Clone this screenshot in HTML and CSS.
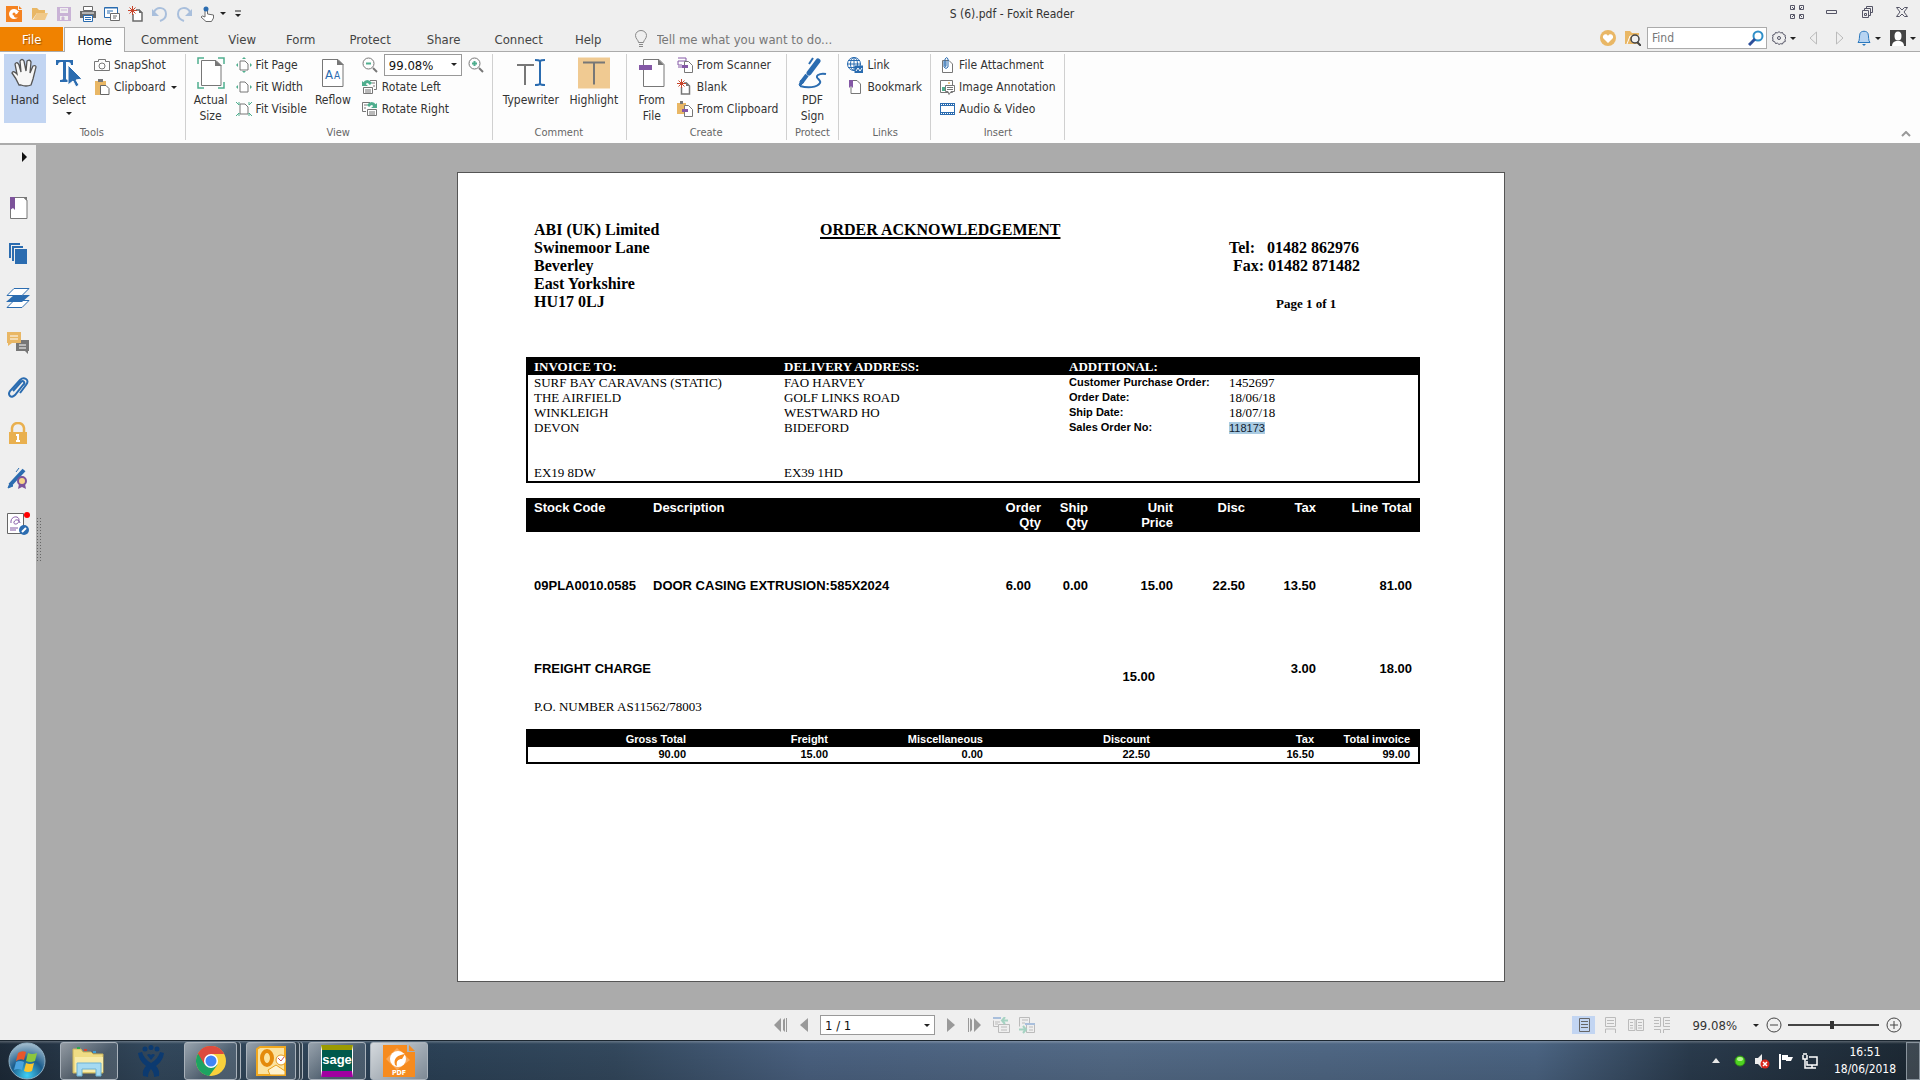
FILE: index.html
```html
<!DOCTYPE html>
<html lang="en">
<head>
    <meta charset="UTF-8">
    <meta name="viewport" content="width=device-width, initial-scale=1.0">
    <title>S (6).pdf - Foxit Reader</title>
    <link rel="stylesheet" href="styles.css">
</head>
<body>
    <!-- title bar -->
    <header class="titlebar">
        <div class="quick">
            <button class="logo" title="Foxit"><svg width="16" height="16" viewBox="0 0 16 16"><path d="M0 0h12v4h4v12H0z" fill="#f58220"/><path d="M13 0l3 3h-3z" fill="#f58220"/><path d="M12 5a5 5 0 1 0 0 6c-1 1-4 1-4-1 0-1 1-2 3-2l2-3z" fill="#fff"/><circle cx="8" cy="8" r="1.500" fill="#f58220"/></svg></button>
            <button title="Open"><svg width="16" height="16" viewBox="0 0 16 16"><path d="M0 14V2h5l2 2h6v3H5z" fill="#e9b765"/><path d="M1 14L5 7h11l-3 7z" fill="#f0c98a"/></svg></button>
            <button title="Save"><svg width="16" height="16" viewBox="0 0 16 16"><path d="M1 1h14v14H1z" fill="#c9b3d6"/><path d="M4 2h8v5H4zM4 10h8v4H4z" fill="#efefef"/><path d="M6 11h2v3H6zM5 4h6" fill="#c9b3d6" stroke="#c9b3d6"/></svg></button>
            <button title="Print"><svg width="16" height="16" viewBox="0 0 16 16"><path d="M3.500.5h9v4h-9z" fill="#fff" stroke="#6b6b6b"/><path d="M0 5h16v7H0z" fill="#6b6b6b"/><path d="M2 7h12" stroke="#fff"/><path d="M3.500 9.500h9v6h-9z" fill="#fff" stroke="#2b6cb0"/><path d="M5 11.500h6M5 13.500h6" stroke="#2b6cb0"/></svg></button>
            <button title="Email"><svg width="16" height="16" viewBox="0 0 16 16"><path d="M.5 1.500h13v10H.5z" fill="#fff" stroke="#2b6cb0"/><path d="M1 2h13M3 5h6M3 7h3" stroke="#2b6cb0"/><path d="M6.500 7.500h9v7h-9z" fill="#fff" stroke="#6b6b6b"/><path d="M9 10h4M9 12h3" stroke="#6b6b6b"/></svg></button>
            <button title="Blank"><svg width="16" height="16" viewBox="0 0 16 16"><path d="M5 8v7h9V7l-3-3H8" fill="#fff" stroke="#6b6b6b" stroke-width="1.500"/><path d="M11 3l4 4h-4z" fill="#6b6b6b"/><path d="M4.500 0v9M0 4.500h9M1.500 1.500l6 6M7.500 1.500l-6 6" stroke="#c8452b"/></svg></button>
            <button title="Undo"><svg width="16" height="16" viewBox="0 0 16 16"><path d="M2 6c3-6 12-5 12 2 0 4-3 6-6 7" fill="none" stroke="#a9bfdc" stroke-width="2"/><path d="M0 3v7h7z" fill="#a9bfdc"/></svg></button>
            <button title="Redo"><svg width="16" height="16" viewBox="0 0 16 16"><path d="M14 6C11 0 2 1 2 8c0 4 3 6 6 7" fill="none" stroke="#a9bfdc" stroke-width="2"/><path d="M16 3v7H9z" fill="#a9bfdc"/></svg></button>
            <button class="drop" title="Touch mode"><svg width="16" height="16" viewBox="0 0 16 16"><path d="M5 10V3.500q1.500-2 2.500 0V8l6 1v3l-2 3.500H6L1 11q1-2 4 0z" fill="#fff" stroke="#6b6b6b"/><circle cx="6" cy="3" r="2.500" fill="#2b6cb0"/></svg></button>
            <button title="Customise"><svg width="8" height="8" viewBox="0 0 8 8"><path d="M1 1h6" stroke="#222"/><path d="M1 4h6L4 7z" fill="#222"/></svg></button>
        </div>
        <h1 class="title">S (6).pdf - Foxit Reader</h1>
        <div class="window-buttons">
            <button title="Layout"><svg width="14" height="14" viewBox="0 0 14 14" fill="none" stroke="#556"><path d="M.5.5h4v4h-4zM9.500.5h4v4h-4zM.5 9.500h4v4h-4zM9.500 9.500h4v4h-4zM2 2l2 2M12 2l-2 2M2 12l2-2M12 12l-2-2"/></svg></button>
            <button title="Minimise"><svg width="14" height="14" viewBox="0 0 14 14" fill="none" stroke="#556"><path d="M1.500 5.500h10v3h-10z"/></svg></button>
            <button title="Restore"><svg width="14" height="14" viewBox="0 0 14 14" fill="none" stroke="#556"><path d="M2.500 5.500h6v7h-6zM4.500 8.500h2v2h-2zM4.500 5V3.500h6v7H9M6.500 3V1.500h6v6H11"/></svg></button>
            <button title="Close"><svg width="14" height="14" viewBox="0 0 14 14" fill="none" stroke="#556"><path d="M1.500 2.500h3L7 5l2.500-2.500h3L9 7l3.500 4.500h-3L7 9l-2.500 2.500h-3L5 7z"/></svg></button>
        </div>
    </header>

    <!-- tabs -->
    <nav class="tabs">
        <a class="tab file" href="#">File</a>
        <a class="tab current" href="#">Home</a>
        <a class="tab comment" href="#">Comment</a>
        <a class="tab" href="#">View</a>
        <a class="tab" href="#">Form</a>
        <a class="tab protect" href="#">Protect</a>
        <a class="tab wide" href="#">Share</a>
        <a class="tab wide" href="#">Connect</a>
        <a class="tab" href="#">Help</a>
        <label class="tell">
            <svg width="12" height="18" viewBox="0 0 12 18" fill="none" stroke="#888"><path d="M3.500 12.500C3.500 10 .5 9 .5 5.500a5.500 5 0 0 1 11 0C11.500 9 8.500 10 8.500 12.500zM4 14.500h4M4 16.500h4"/></svg>
            <input type="text" placeholder="Tell me what you want to do..." aria-label="Tell me what you want to do">
        </label>
        <div class="tab-tools">
            <button title="Favourite"><svg width="16" height="16" viewBox="0 0 16 16"><circle cx="8" cy="8" r="8" fill="#e9b765"/><path d="M8 13L3 8c-1-4 4-5 5-2 1-3 6-2 5 2z" fill="#fff"/></svg></button>
            <button title="Search folder"><svg width="16" height="16" viewBox="0 0 16 16"><path d="M0 14V1h5l2 2h7v11z" fill="#e9b765"/><path d="M2 14l3-8h9" fill="none" stroke="#fff"/><circle cx="10" cy="9" r="4" fill="#efefef" stroke="#444" stroke-width="1.500"/><path d="M12 12l4 4" stroke="#444" stroke-width="2"/></svg></button>
            <label class="find">
                <input type="text" placeholder="Find" aria-label="Find">
                <svg width="16" height="16" viewBox="0 0 16 16" fill="none"><circle cx="10" cy="6" r="4.500" stroke="#2f8fc8" stroke-width="2"/><path d="M7 9l-6 6" stroke="#2c4f9a" stroke-width="3"/></svg>
            </label>
            <button class="drop gear" title="Settings"><svg width="14" height="14" viewBox="0 0 14 14" fill="none" stroke="#556"><path d="M7 .5l1.500 1.500 2-.5.8 1.800 2 .9-.3 1.800 1 1-1 1.500.3 2-2 .7-.8 1.800-2-.3L7 13.500l-1.500-1.300-2 .3-.8-1.800-2-.7.3-2L.5 7l.5-1.500L.7 4l2-.7.8-1.800 2 .5z"/><circle cx="7" cy="7" r="1.500"/></svg></button>
            <button class="step" title="Previous"><svg width="9" height="14" viewBox="0 0 9 14"><path d="M7.500 1v12l-6.500-6z" fill="none" stroke="#bbb"/></svg></button>
            <button class="step" title="Next"><svg width="9" height="14" viewBox="0 0 9 14"><path d="M1.500 1v12l6.500-6z" fill="none" stroke="#bbb"/></svg></button>
            <button class="drop" title="Notifications"><svg width="14" height="16" viewBox="0 0 14 16"><path d="M1 12.500c2-2 1-6 2-9 1-3 7-3 8 0 1 3 0 7 2 9z" fill="#b7d4f2" stroke="#2b78bd"/><path d="M5 14h4l-2 2z" fill="#2b78bd"/></svg></button>
            <button class="drop" title="Account"><svg width="16" height="16" viewBox="0 0 16 16"><path d="M0 0h16v16H0z" fill="#444"/><ellipse cx="8" cy="6" rx="3.500" ry="4.500" fill="#fff"/><path d="M2 16q0-4 4-5h4q4 1 4 5z" fill="#fff"/></svg></button>
        </div>
    </nav>

    <!-- ribbon -->
    <section class="ribbon">
        <div class="group">
            <div class="items">
                <button class="big active"><svg width="28" height="30" viewBox="0 0 28 30"><path d="M8 27Q5 20 1 15q1-3 5 1L4 6q2-3 4 1l2 7-1-11q2-3 4 0l2 10 1-10q3-2 4 1l-1 11 3-7q3-1 3 1l-3 12-2 6q-5 2-10 0z" fill="#f7f7f7" stroke="#555" stroke-width="1.300"/></svg><span>Hand</span></button>
                <button class="big"><svg width="28" height="30" viewBox="0 0 28 30"><path d="M1 2h17v5h-2q0-3-3-3h-2v17q0 1 3 1v2H5v-2q3 0 3-1V4H6Q3 4 3 7H1z" fill="#2b6cb0"/><path d="M13 7v20l5-4 3 6 3-2-3-5 6-1z" fill="#2b6cb0" stroke="#fdfdfd"/></svg><span>Select</span><i class="caret"></i></button>
                <div class="stack">
                    <button><svg width="16" height="16" viewBox="0 0 16 16" fill="none" stroke="#777"><path d="M.5 4.500h4V2.500h7v2h4v9H.5z"/><circle cx="8" cy="9" r="3"/></svg>SnapShot</button>
                    <button class="drop"><svg width="16" height="16" viewBox="0 0 16 16"><path d="M1 2h11v14H1z" fill="#e9b765"/><path d="M4 0h5v3H4z" fill="#777"/><path d="M6.500 6.500H12l3 3v6H6.500z" fill="#fff" stroke="#666"/></svg>Clipboard</button>
                </div>
            </div>
            <h2>Tools</h2>
        </div>
        <div class="group">
            <div class="items">
                <button class="big"><svg width="28" height="32" viewBox="0 0 28 32" fill="none"><path d="M1 7V1h6M21 1h6v6M1 25v6h6M21 31h6v-6" stroke="#4fae8e" stroke-width="1.500"/><path d="M4.500 3.500H19l5 5v20H4.500z" fill="#fff" stroke="#777"/><path d="M18 3l7 6h-7z" fill="#777"/></svg><span>Actual<br>Size</span></button>
                <div class="stack">
                    <button><svg width="16" height="16" viewBox="0 0 16 16"><path d="M4 4h5l3 3v6H4z" fill="#fff" stroke="#777"/><path d="M8 0l2 2H6zM8 16l2-2H6zM0 8l2-2v4zM16 8l-2-2v4z" fill="#4fae8e"/></svg>Fit Page</button>
                    <button><svg width="16" height="16" viewBox="0 0 16 16"><path d="M4 3h5l3 3v7H4z" fill="#fff" stroke="#777"/><path d="M0 8l2-2v4zM16 8l-2-2v4z" fill="#4fae8e"/></svg>Fit Width</button>
                    <button><svg width="16" height="16" viewBox="0 0 16 16"><path d="M4 3h5l3 3v7H4z" fill="#fff" stroke="#777"/><path d="M0 1l3 3V1M16 1l-3 3V1M0 15l3-3v3M16 15l-3-3v3" fill="none" stroke="#4fae8e"/></svg>Fit Visible</button>
                </div>
                <button class="big"><svg width="24" height="30" viewBox="0 0 24 30"><path d="M1.500 1.500H17l5 5v22H1.500z" fill="#fff" stroke="#777"/><path d="M16 1l7 6h-7z" fill="#777"/><text x="4" y="21" font-size="13" fill="#2b6cb0">A</text><text x="13" y="21" font-size="10" fill="#2b6cb0">A</text></svg><span>Reflow</span></button>
                <div class="stack rotate">
                    <div class="zoom">
                        <button title="Zoom out"><svg width="16" height="16" viewBox="0 0 16 16" fill="none"><circle cx="6.500" cy="6.500" r="5.500" stroke="#777"/><path d="M4 6.500h5" stroke="#4fae8e" stroke-width="2"/><path d="M11 11l4 4" stroke="#777" stroke-width="2"/></svg></button>
                        <span class="select-box"><select aria-label="Zoom"><option>99.08%</option></select></span>
                        <button title="Zoom in"><svg width="16" height="16" viewBox="0 0 16 16" fill="none"><circle cx="6.500" cy="6.500" r="5.500" stroke="#777"/><path d="M4 6.500h5M6.500 4v5" stroke="#4fae8e" stroke-width="2"/><path d="M11 11l4 4" stroke="#777" stroke-width="2"/></svg></button>
                    </div>
                    <button><svg width="16" height="16" viewBox="0 0 16 16" fill="none"><path d="M8 1.500h6.500v9H12M10 4h3M11 7h2M1.500 8.500h9v6h-9zM4 10v4M6 10v4M8 10v4" stroke="#777"/><path d="M2 5q3-5 7 0" stroke="#4fae8e" stroke-width="3"/><path d="M0 2v5h6z" fill="#4fae8e"/></svg>Rotate Left</button>
                    <button><svg width="16" height="16" viewBox="0 0 16 16" fill="none"><path d="M8 1.500H.5v9H4M2 4h3M2 7h2M5.500 8.500h9v6h-9zM8 10v4M10 10v4M12 10v4" stroke="#777"/><path d="M13 5q-3-5-7 0" stroke="#4fae8e" stroke-width="3"/><path d="M15 2v5H9z" fill="#4fae8e"/></svg>Rotate Right</button>
                </div>
            </div>
            <h2>View</h2>
        </div>
        <div class="group">
            <div class="items">
                <button class="big typewriter"><svg width="30" height="30" viewBox="0 0 30 30" fill="none" stroke-width="2"><path d="M1 7h17M9 7v20" stroke="#777"/><path d="M19 2q4 0 5 1 1-1 5-1M24 3v23M19 27q4 0 5-1 1 1 5 1" stroke="#2b6cb0"/></svg><span>Typewriter</span></button>
                <button class="big highlight"><svg width="32" height="31" viewBox="0 0 32 31"><path d="M0 0h32v31H0z" fill="#f0ca92"/><path d="M5 5h22M16 5v22" stroke="#777" stroke-width="2"/></svg><span>Highlight</span></button>
            </div>
            <h2>Comment</h2>
        </div>
        <div class="group">
            <div class="items">
                <button class="big"><svg width="26" height="30" viewBox="0 0 26 30"><path d="M4.500 1.500H20l5 5v22H4.500z" fill="#fff" stroke="#777"/><path d="M19 1l6 6h-6z" fill="#777"/><path d="M0 7h13v5H0z" fill="#8458a6"/></svg><span>From<br>File</span></button>
                <div class="stack">
                    <button><svg width="16" height="16" viewBox="0 0 16 16"><path d="M1 1h8M9 1v3H1v4h4M1 10h4" fill="none" stroke="#8458a6"/><path d="M7.500 4.500h4l4 4v7h-8z" fill="#fff" stroke="#777"/><path d="M5 8h6v3H5z" fill="#8458a6"/></svg>From Scanner</button>
                    <button><svg width="16" height="16" viewBox="0 0 16 16"><path d="M4.500 8v7h8V7l-3-3H7" fill="#fff" stroke="#777" stroke-width="1.500"/><path d="M9 3l4 4H9z" fill="#777"/><path d="M4.500 0v9M0 4.500h9M1.500 1.500l6 6M7.500 1.500l-6 6" stroke="#c8452b"/></svg>Blank</button>
                    <button><svg width="16" height="16" viewBox="0 0 16 16"><path d="M0 2h9v11H0z" fill="#e9b765"/><path d="M3 0h3v3H3z" fill="#777"/><path d="M7.500 4.500h4l4 4v7h-8z" fill="#fff" stroke="#777"/><path d="M5 8h6v3H5z" fill="#8458a6"/></svg>From Clipboard</button>
                </div>
            </div>
            <h2>Create</h2>
        </div>
        <div class="group">
            <div class="items">
                <button class="big"><svg width="30" height="32" viewBox="0 0 30 32" fill="none" stroke="#2b6cb0"><path d="M21 4L12 16" stroke-width="5" stroke-linecap="round"/><path d="M10 18l-6 8" stroke-width="4"/><path d="M2 28l2-5 3 2-4 4z" fill="#2b6cb0"/><path d="M16 1l-4 6" stroke-width="2"/><path d="M29 17q-5-1-8 1c-4 3 4 5 2 8-3 5-13 5-20 3" stroke-width="2"/></svg><span>PDF<br>Sign</span></button>
            </div>
            <h2>Protect</h2>
        </div>
        <div class="group list">
            <div class="items">
                <div class="stack">
                    <button><svg width="16" height="16" viewBox="0 0 16 16" fill="none" stroke="#2b6cb0"><circle cx="7" cy="7" r="6.500"/><path d="M7 0v14M0 7h14M1 3.500h12M1 10.500h12"/><ellipse cx="7" cy="7" rx="3.500" ry="6.500"/><path d="M8 9h8v7H8z" fill="#2b6cb0"/><path d="M9 14l2-3 2 3 2-3" stroke="#fff"/></svg>Link</button>
                    <button><svg width="16" height="16" viewBox="0 0 16 16"><path d="M4 1.500h6l3.500 3.500v9.500H4z" fill="#fff" stroke="#777"/><path d="M2 1h4v8L4 7 2 9z" fill="#8458a6"/></svg>Bookmark</button>
                </div>
            </div>
            <h2>Links</h2>
        </div>
        <div class="group list">
            <div class="items">
                <div class="stack">
                    <button><svg width="16" height="16" viewBox="0 0 16 16"><path d="M3.500 3.500H10l3.500 3.500v8.500h-10z" fill="#fff" stroke="#777"/><path d="M5 4v6q2 3 4 0V2Q8-1 6 2v7q1 1 1 0V4" fill="none" stroke="#2b6cb0"/></svg>File Attachment</button>
                    <button><svg width="16" height="16" viewBox="0 0 16 16"><path d="M1.500 1.500h12v12h-12z" fill="#fff" stroke="#777"/><path d="M3 12V8h3v4z" fill="#4fae8e"/><circle cx="10" cy="4" r="1" fill="#e9b765"/><path d="M6.500 6.500h9v6H12l-2 3-1-3H6.500z" fill="#fff" stroke="#777"/><path d="M8 8.500h6M8 10.500h6" stroke="#777"/></svg>Image Annotation</button>
                    <button><svg width="16" height="16" viewBox="0 0 16 16"><path d="M1 2h15v12H1z" fill="#2b6cb0"/><path d="M2 5h13v6H2z" fill="#fff"/><path d="M2 3.500h13M2 12.500h13" stroke="#fff" stroke-dasharray="1 1"/></svg>Audio &amp; Video</button>
                </div>
            </div>
            <h2>Insert</h2>
        </div>
        <button class="collapse" title="Collapse"><svg width="10" height="6" viewBox="0 0 10 6"><path d="M1 5l4-4 4 4" fill="none" stroke="#999" stroke-width="2"/></svg></button>
    </section>

    <main class="work">
        <aside class="panels">
            <button class="expand" title="Expand"><svg width="6" height="10" viewBox="0 0 6 10"><path d="M0 0l5 5-5 5z" fill="#111"/></svg></button>
            <button title="Bookmarks"><svg width="22" height="22" viewBox="0 0 22 22"><path d="M3.500.5H17l3 3v18H3.500z" fill="#fff" stroke="#777"/><path d="M16 0h4v4z" fill="#777"/><path d="M3 0h5v13l-2-2-3 2z" fill="#7d539b"/></svg></button>
            <button title="Pages"><svg width="22" height="22" viewBox="0 0 22 22"><path d="M3 16V2h10M6 19V5h10" fill="none" stroke="#2b6cb0" stroke-width="2"/><path d="M8 7h12v15H8z" fill="#2b6cb0"/></svg></button>
            <button title="Layers"><svg width="24" height="22" viewBox="0 0 24 22"><path d="M8 13.500h15l-7 7H1z" fill="#fff" stroke="#2b6cb0"/><path d="M8 8h16l-8 7H0z" fill="#2b6cb0"/><path d="M8 1.500h15l-7 7H1z" fill="#fff" stroke="#2b6cb0"/></svg></button>
            <button title="Comments"><svg width="22" height="22" viewBox="0 0 22 22"><path d="M9 8h13v11h-1v3l-3-3H9z" fill="#777"/><path d="M0 0h14v11H5l-4 3v-3H0z" fill="#e9b765"/><path d="M3 4h8M3 7h8M12 13h7M12 16h7" stroke="#fff"/></svg></button>
            <button title="Attachments"><svg width="22" height="22" viewBox="0 0 22 22"><path d="M6 14l8-9q2-2 3 0t-1 3l-8 10q-3 3-5 1t0-5L13 3q3-3 6-1t0 6l-6 8" fill="none" stroke="#2b6cb0" stroke-width="2"/></svg></button>
            <button title="Security"><svg width="20" height="22" viewBox="0 0 20 22"><path d="M4 10V6q1-5 6-5t6 5v4" fill="none" stroke="#e9b04f" stroke-width="2.500"/><path d="M1 10h18v12H1z" fill="#e9b04f"/><path d="M10 12v7M8 13h2M8 19h4" stroke="#fff" stroke-width="2"/></svg></button>
            <button title="Signatures"><svg width="22" height="22" viewBox="0 0 22 22" fill="none"><path d="M17 3L3 18" stroke="#2b6cb0" stroke-width="4"/><path d="M1 21l2-5 3 3zM12 1L9 5" fill="#2b6cb0" stroke="#2b6cb0"/><path d="M12 17l-1 5 4-2 4 2-1-5" fill="#7d539b"/><circle cx="15" cy="14" r="4" fill="#f8d58a" stroke="#7d539b" stroke-width="2"/></svg></button>
            <button title="Sign document"><svg width="24" height="24" viewBox="0 0 24 24" fill="none"><path d="M1.500 2.500h16v20h-16z" fill="#fff" stroke="#666"/><path d="M5 12c-1-7 8-8 8-3s-6 5-5 2 5-3 6 1M4 17h8M4 19h6" stroke="#8458a6"/><circle cx="21" cy="4" r="3" fill="#f00"/><circle cx="18" cy="19" r="5" fill="#2b6cb0"/><path d="M16 21l4-4" stroke="#fff" stroke-width="2"/></svg></button>
        </aside>
        <div class="splitter"></div>
        <div class="viewer">
            <article class="page">
                <div class="letterhead">
                    <address>ABI (UK) Limited<br>Swinemoor Lane<br>Beverley<br>East Yorkshire<br>HU17 0LJ</address>
                    <h2>ORDER ACKNOWLEDGEMENT</h2>
                    <div class="contact">
                        <p>Tel:&nbsp;&nbsp; 01482 862976</p>
                        <p>&nbsp;Fax: 01482 871482</p>
                        <p class="page-no">Page 1 of 1</p>
                    </div>
                </div>

                <section class="parties">
                    <h3>INVOICE TO:</h3>
                    <h3>DELIVERY ADDRESS:</h3>
                    <h3>ADDITIONAL:</h3>
                    <p>SURF BAY CARAVANS (STATIC)<br>THE AIRFIELD<br>WINKLEIGH<br>DEVON<br><br><br>EX19 8DW</p>
                    <p>FAO HARVEY<br>GOLF LINKS ROAD<br>WESTWARD HO<br>BIDEFORD<br><br><br>EX39 1HD</p>
                    <dl>
                        <dt>Customer Purchase Order:</dt><dd>1452697</dd>
                        <dt>Order Date:</dt><dd>18/06/18</dd>
                        <dt>Ship Date:</dt><dd>18/07/18</dd>
                        <dt>Sales Order No:</dt><dd><mark>118173</mark></dd>
                    </dl>
                </section>

                <table class="lines">
                    <colgroup><col class="c-code"><col><col class="c-order"><col class="c-ship"><col class="c-unit"><col class="c-disc"><col class="c-tax"><col class="c-total"></colgroup>
                    <thead>
                        <tr><th>Stock Code</th><th>Description</th><th>Order<br>Qty</th><th>Ship<br>Qty</th><th>Unit<br>Price</th><th>Disc</th><th>Tax</th><th>Line Total</th></tr>
                    </thead>
                    <tbody>
                        <tr><td>09PLA0010.0585</td><td>DOOR CASING EXTRUSION:585X2024</td><td class="order-qty">6.00</td><td>0.00</td><td>15.00</td><td>22.50</td><td>13.50</td><td>81.00</td></tr>
                        <tr><td>FREIGHT CHARGE</td><td></td><td></td><td></td><td class="freight-net">15.00</td><td></td><td>3.00</td><td>18.00</td></tr>
                    </tbody>
                </table>
                <p class="po">P.O. NUMBER AS11562/78003</p>

                <table class="totals">
                    <colgroup><col class="t-gross"><col class="t-freight"><col class="t-misc"><col class="t-disc"><col><col class="c-total"></colgroup>
                    <thead>
                        <tr><th>Gross Total</th><th>Freight</th><th>Miscellaneous</th><th>Discount</th><th>Tax</th><th>Total invoice</th></tr>
                    </thead>
                    <tbody>
                        <tr><td>90.00</td><td>15.00</td><td>0.00</td><td>22.50</td><td>16.50</td><td>99.00</td></tr>
                    </tbody>
                </table>
            </article>
        </div>
    </main>

    <!-- status bar -->
    <section class="status">
        <div class="pager">
            <button title="First"><svg width="14" height="14" viewBox="0 0 14 14" fill="#999"><path d="M7 0v14L0 7zM9 2l2-2v14l-2-2z M12 0h1v14h-1z"/></svg></button>
            <button title="Previous"><svg width="8" height="14" viewBox="0 0 8 14" fill="#999"><path d="M8 0v14L0 7z"/></svg></button>
            <span class="select-box"><select aria-label="Page"><option>1 / 1</option></select></span>
            <button title="Next"><svg width="8" height="14" viewBox="0 0 8 14" fill="#999"><path d="M0 0v14l8-7z"/></svg></button>
            <button title="Last"><svg width="14" height="14" viewBox="0 0 14 14" fill="#999"><path d="M7 0v14l7-7zM1 0h1v14H1zM3 0l2 2v10l-2 2z"/></svg></button>
            <div class="history">
                <button title="Previous view"><svg width="17" height="17" viewBox="0 0 17 17" fill="none" stroke="#bbb"><path d="M.5 1.500h7M.5 3.500v6h5M2 5h5M2 7h3M5.500 7.500h11v8h-11zM8 10h6M8 13h6"/><path d="M0 1h8" stroke="#a9bfdc" stroke-width="2"/><path d="M9 3.500h6M12 0L9 3.500 12 7" stroke="#a5d3c2" stroke-width="2"/></svg></button>
                <button title="Next view"><svg width="17" height="17" viewBox="0 0 17 17" fill="none" stroke="#bbb"><path d="M.5 9.500v-9h10v6M3 3h6M3 6h3M7.500 7v8.500h8V7M10 10h4M10 13h4"/><path d="M6 7h10" stroke="#a9bfdc" stroke-width="2"/><path d="M0 12.500h6M4 9l3 3.500L4 16" stroke="#a5d3c2" stroke-width="2"/></svg></button>
            </div>
        </div>
        <div class="views">
            <button class="active" title="Single page"><svg width="16" height="16" viewBox="0 0 16 16" fill="none" stroke="#666"><path d="M3.500 1.500h10v13h-10zM5 4.500h7M5 7.500h7M5 10.500h7"/></svg></button>
            <button title="Continuous"><svg width="16" height="16" viewBox="0 0 16 16" fill="none" stroke="#bbb"><path d="M3.500.5h10v9h-10zM5 3.500h7M5 6.500h7M3.500 16v-4h10v4"/></svg></button>
            <button title="Facing"><svg width="16" height="16" viewBox="0 0 16 16" fill="none" stroke="#bbb"><path d="M.5 2.500H7v11H.5zM8.500 2.500h7v11h-7zM2 5.500h3M2 8.500h3M2 11h3M10 5.500h4M10 8.500h4M10 11h4"/></svg></button>
            <button title="Continuous facing"><svg width="16" height="16" viewBox="0 0 16 16" fill="none" stroke="#bbb"><path d="M0 .5h6.500v9H0M16 .5H9.500v9H16M0 3.500h5M0 6.500h5M11 3.500h5M11 6.500h5M0 12.500h6.500V16M16 12.500H9.500V16"/></svg></button>
            <button class="drop percent">99.08%</button>
            <div class="slider">
                <button title="Zoom out"><svg width="16" height="16" viewBox="0 0 16 16" fill="none" stroke="#444"><circle cx="8" cy="8" r="7"/><path d="M4 8h8"/></svg></button>
                <input type="range" min="0" max="100" value="48" aria-label="Zoom level">
                <button title="Zoom in"><svg width="16" height="16" viewBox="0 0 16 16" fill="none" stroke="#444"><circle cx="8" cy="8" r="7"/><path d="M4 8h8M8 4v8"/></svg></button>
            </div>
        </div>
    </section>

    <!-- taskbar -->
    <footer class="taskbar">
        <button class="start" title="Start"><svg width="38" height="38" viewBox="0 0 38 38"><defs><radialGradient id="orb" cx="50%" cy="90%" r="90%"><stop offset="0" stop-color="#3fd0f5"/><stop offset=".5" stop-color="#1c5d8d"/><stop offset="1" stop-color="#a8c0d0"/></radialGradient></defs><circle cx="19" cy="19" r="18" fill="url(#orb)" stroke="#8fb0c4"/><path d="M10 11q4-3 8-1l-2 8q-4-2-8 1z" fill="#e8562a"/><path d="M20 11q4 2 9 0l-2 8q-5 2-9 0z" fill="#8cc63e"/><path d="M8 20q4-2 8 0l-2 8q-4-2-8 0z" fill="#4aa3df"/><path d="M18 21q4 2 8 0l-2 8q-4 2-8 0z" fill="#fbc52d"/></svg></button>
        <button class="task open" title="Explorer"><svg width="34" height="32" viewBox="0 0 34 32"><path d="M1 4h8l2 3h8l2 2h10v19H1z" fill="#efdc84" stroke="#cbb45a"/><path d="M3 12h28v15H3z" fill="#f7ebaa"/><path d="M5 2h3v2H5z" fill="#2fa84f"/><path d="M12 4h3v2h-3z" fill="#d9432f"/><path d="M21 6h3v2h-3z" fill="#3c9fd9"/><path d="M5 31V18h24v13h-5v-7H10v7z" fill="#a5daf2" stroke="#6db1d4"/></svg></button>
        <button class="task" title="Jira"><svg width="26" height="32" viewBox="0 0 26 32" fill="#0c3a70"><circle cx="7" cy="4" r="2.500"/><circle cx="13" cy="2.500" r="2.500"/><circle cx="19" cy="4" r="2.500"/><path d="M0 8l4-1q2 7 9 11 7-4 9-11l4 1q-1 8-8 13 4 4 3 10l-5 1q0-5-3-8-3 3-3 8l-5-1q-1-6 3-10-7-5-8-13z"/><path d="M9 10q2-2 4 0 2-2 4 0l-4 5z"/></svg></button>
        <button class="task open stacked" title="Chrome"><svg width="30" height="30" viewBox="0 0 30 30"><circle cx="15" cy="15" r="15" fill="#f9d13c"/><path d="M15 15L2 7.500A15 15 0 0 1 28 7.500H15z" fill="#dd4b3e"/><path d="M2 7.500a15 15 0 0 0 11 22.400L21.500 18.700 15 15z" fill="#1da362"/><path d="M2 7.500l6.500 11L15 8h13A15 15 0 0 0 2 7.500z" fill="#dd4b3e"/><circle cx="15" cy="15" r="7" fill="#fff"/><circle cx="15" cy="15" r="5.500" fill="#4285f4"/></svg></button>
        <button class="task open stacked more" title="Outlook"><svg width="30" height="30" viewBox="0 0 30 30"><path d="M1 3l3-2h25v28H1z" fill="#fbe3a0" stroke="#f0a71e" stroke-width="2"/><ellipse cx="11" cy="12" rx="5" ry="7" fill="none" stroke="#e48a0c" stroke-width="4"/><path d="M12 24l8-5 9 6v4H14z" fill="#fff3cf" stroke="#e9a01b"/><circle cx="25" cy="14" r="5" fill="#fff" stroke="#e2981e"/><path d="M22 12l3 3 3-4" fill="none" stroke="#c55"/></svg></button>
        <button class="task open" title="Sage"><span class="sage">sage</span></button>
        <button class="task open front" title="Foxit Reader"><svg width="32" height="32" viewBox="0 0 32 32"><path d="M0 0h24v7h8v25H0z" fill="#f68b1f"/><path d="M26 0l6 6h-6z" fill="#f68b1f"/><path d="M14 3L3 14l11 11 13-10z" fill="#f9a95b"/><circle cx="15" cy="14" r="8" fill="#fff"/><path d="M12 20c-2-7 3-10 10-11l-3 5c-4 0-6 2-5 7z" fill="#f68b1f"/><text x="9" y="30" font-size="7" font-weight="bold" fill="#fff">PDF</text></svg></button>
        <div class="tray">
            <button class="hidden-icons" title="Hidden icons"><svg width="8" height="5" viewBox="0 0 8 5"><path d="M0 5l4-5 4 5z" fill="#e8e8e8"/></svg></button>
            <button title="Status"><svg width="12" height="12" viewBox="0 0 12 12"><circle cx="6" cy="6" r="5" fill="#4fd321" stroke="#2d8d14"/><ellipse cx="6" cy="4" rx="3" ry="2" fill="#b4f48f"/></svg></button>
            <button title="Volume"><svg width="16" height="16" viewBox="0 0 16 16"><path d="M1 5h3l4-4v14l-4-4H1z" fill="#eee"/><circle cx="11" cy="11" r="4.500" fill="#d9261c"/><path d="M9 9l4 4M13 9l-4 4" stroke="#fff" stroke-width="1.500"/></svg></button>
            <button title="Action centre"><svg width="16" height="16" viewBox="0 0 16 16"><path d="M1 1h2v15H1zM4 2h6v2h5l-2 4H8V7H4z" fill="#fff"/></svg></button>
            <button title="Network"><svg width="16" height="16" viewBox="0 0 16 16" fill="none" stroke="#fff" stroke-width="1.500"><path d="M7 4h8v8H5V8M10 12v3M6 15h8M1 2v4h4V2M3 6v9h3M2 0v2M4 0v2"/></svg></button>
            <time>16:51<br>18/06/2018</time>
            <button class="desktop" title="Show desktop"></button>
        </div>
    </footer>
</body>
</html>
```
FILE: styles.css
```css
* {
    box-sizing: border-box;
}
body {
    font-family: "DejaVu Sans Condensed", "DejaVu Sans", sans-serif;
    font-size: 12px;
    color: #333;
    margin: 0;
    height: 100vh;
    display: flex;
    flex-direction: column;
    overflow: hidden;
    background: #efefef;
}
button, input, select {
    font: inherit;
    color: inherit;
    background: none;
    border: 0;
    padding: 0;
    margin: 0;
}
button {
    display: flex;
    align-items: center;
    justify-content: center;
    flex: none;
    white-space: nowrap;
}
svg {
    display: block;
    flex: none;
}
h1, h2, h3, p, dl, dd {
    margin: 0;
    font-size: inherit;
    font-weight: normal;
}
.drop::after, .caret, .select-box::after {
    content: "";
    border: 3px solid transparent;
    border-top-color: #222;
    border-bottom: 0;
    margin-left: 4px;
}

/* title bar */
.titlebar {
    display: grid;
    grid-template-columns: 1fr auto 1fr;
    align-items: center;
    height: 27px;
    flex: none;
}
.quick {
    display: flex;
    gap: 8px;
    padding-left: 6px;
}
.logo {
    margin-right: 2px;
}
.title {
    padding-left: 104px;
}
.window-buttons {
    display: flex;
    gap: 21px;
    justify-content: flex-end;
    padding: 0 11px 4px 0;
}

/* tabs */
.tabs {
    display: flex;
    height: 25px;
    flex: none;
    font-size: 13px;
    border-bottom: 1px solid #ababab;
}
.tab {
    color: #444;
    text-decoration: none;
    line-height: 26px;
    height: 25px;
    padding: 0 15px;
}
.tab.file {
    background: #f08200;
    color: #fff;
    text-shadow: 1px 1px 1px #a05500;
    padding: 0 22px;
    height: 24px;
}
.tab.current {
    background: #fdfdfd;
    color: #111;
    border: 1px solid #ababab;
    border-bottom: 0;
    margin-left: 1px;
    padding: 0 12px;
    line-height: 25px;
}
.tab.comment {
    padding-left: 16px;
}
.tab.protect {
    padding: 0 19px;
}
.tab.wide {
    padding: 0 17px;
}
.tell {
    display: flex;
    align-items: center;
    gap: 10px;
    padding-left: 18px;
}
.tell input {
    width: 200px;
}
::placeholder {
    color: #777;
    opacity: 1;
}
.tab-tools {
    display: flex;
    align-items: center;
    gap: 9px;
    margin-left: auto;
    padding: 0 4px 2px 0;
}
.find {
    display: flex;
    align-items: center;
    width: 120px;
    height: 22px;
    margin-left: -3px;
    padding: 0 2px 0 4px;
    background: #fff;
    border: 1px solid #ababab;
}
.find input {
    flex: 1;
    min-width: 0;
    font-size: 12px;
}
.gear {
    margin-left: -4px;
}
.step {
    width: 17px;
}

/* ribbon */
.ribbon {
    display: flex;
    height: 93px;
    flex: none;
    background: #fdfdfd;
    border-bottom: 2px solid #ababab;
    padding-top: 2px;
}
.group {
    display: flex;
    flex-direction: column;
    height: 86px;
    padding: 0 5px 0 4px;
    border-right: 1px solid #d0d0d0;
}
.group.list {
    padding-left: 6px;
}
.group h2 {
    margin-top: auto;
    line-height: 14px;
    font-size: 11px;
    text-align: center;
    color: #666;
}
.items {
    display: flex;
    gap: 2px;
}
.big {
    flex-direction: column;
    justify-content: flex-start;
    min-width: 42px;
    height: 69px;
    padding-top: 3px;
    line-height: 16px;
}
.big svg {
    height: 32px;
}
.big span {
    margin-top: 3px;
}
.big.active {
    background: #c2d5f2;
}
.big.typewriter {
    width: 68px;
}
.big.highlight {
    width: 54px;
}
.caret {
    margin: 4px 0 0;
}
.stack {
    display: flex;
    flex-direction: column;
    align-items: flex-start;
    padding: 0 3px 0 2px;
}
.stack.rotate {
    padding-left: 6px;
}
.stack button {
    height: 22px;
    gap: 4px;
}
.stack .drop::after {
    margin-left: 1px;
}
.zoom {
    display: flex;
    gap: 6px;
}
.select-box {
    position: relative;
    display: flex;
}
.select-box::after {
    position: absolute;
    right: 5px;
    top: 9px;
}
.select-box select {
    appearance: none;
    width: 78px;
    height: 22px;
    padding-left: 4px;
    background: #fff;
    border: 1px solid #999;
    color: #111;
    font-size: 13px;
}
.collapse {
    align-self: flex-end;
    margin: 0 9px 6px auto;
}

/* side panels and viewer */
.work {
    display: flex;
    flex: 1;
    min-height: 0;
    background: #ababab;
}
.panels {
    display: flex;
    flex-direction: column;
    align-items: center;
    width: 36px;
    flex: none;
    background: #efefef;
}
.panels button {
    height: 45px;
}
.panels .expand {
    height: 23px;
    margin-bottom: 17px;
    padding-left: 14px;
}
.splitter {
    width: 6px;
    height: 46px;
    flex: none;
    align-self: flex-start;
    margin-top: 372px;
    background: radial-gradient(circle, #666 1px, transparent 1px) 0 0 / 3px 3px;
}
.viewer {
    flex: 1;
    overflow: hidden;
    padding-top: 27px;
}

/* the document */
.page {
    max-width: 1048px;
    min-height: 810px;
    margin: 0 auto;
    padding: 48px 84px 48px 68px;
    background: #fff;
    border: 1px solid #555;
    font: 13px/15px "Liberation Serif", serif;
    color: #000;
}
.letterhead {
    display: grid;
    grid-template-columns: 286fr 409fr 191fr;
    padding-left: 8px;
    min-height: 136px;
    font-size: 16px;
    line-height: 18px;
    font-weight: bold;
}
.letterhead address {
    font-style: normal;
}
.letterhead h2 {
    font-weight: bold;
    text-decoration: underline 2px;
    text-underline-offset: 2px;
}
.contact {
    padding-top: 18px;
}
.contact p {
    font-weight: bold;
}
.contact .page-no {
    font-size: 13px;
    padding: 20px 0 0 47px;
}
.parties {
    display: grid;
    grid-template-columns: 250fr 285fr 355fr;
    border: 2px solid #000;
    padding-bottom: 1px;
}
.parties h3 {
    font-weight: bold;
    line-height: 16px;
    background: #000;
    color: #fff;
    padding-left: 6px;
}
.parties p, .parties dl {
    padding-left: 6px;
}
.parties dl {
    display: grid;
    grid-template-columns: 160px 1fr;
    align-content: start;
}
/* small bold sans for labels and totals */
.parties dt, .totals {
    font: bold 11px/15px "Liberation Sans", sans-serif;
}
.parties mark {
    font: 11px "Liberation Sans", sans-serif;
    background: #a9cbe2;
    color: #123;
}
table {
    width: 100%;
    table-layout: fixed;
    border-collapse: separate;
    border-spacing: 0;
}
th, td {
    padding: 0 8px;
    text-align: right;
    vertical-align: top;
}
thead {
    background: #000;
    color: #fff;
}
.lines {
    margin-top: 15px;
    font: bold 13px/15px "Liberation Sans", sans-serif;
}
.lines th {
    padding-top: 2px;
    padding-bottom: 2px;
}
.lines td {
    height: 83px;
    padding-top: 46px;
    white-space: nowrap;
}
.lines th:nth-child(-n+2), .lines td:nth-child(-n+2) {
    text-align: left;
}
.lines .order-qty {
    padding-right: 18px;
}
.lines .freight-net {
    padding-top: 54px;
    padding-right: 26px;
}
.c-code { width: 119px; }
.c-order { width: 103px; }
.c-ship { width: 47px; }
.c-unit { width: 85px; }
.c-disc { width: 72px; }
.c-tax { width: 71px; }
.c-total { width: 96px; }
.po {
    padding: 1px 8px 15px;
}
.totals {
    border: 2px solid #000;
}
.totals th {
    line-height: 16px;
}
.t-gross { width: 166px; }
.t-freight { width: 142px; }
.t-misc { width: 155px; }
.t-disc { width: 167px; }

/* status bar */
.status {
    display: flex;
    align-items: center;
    justify-content: flex-end;
    height: 30px;
    flex: none;
}
.pager {
    display: flex;
    align-items: center;
    gap: 12px;
    margin-right: auto;
    padding-left: calc(40% + 6px);
}
.pager .select-box select {
    width: 115px;
    height: 20px;
}
.history {
    display: flex;
    gap: 9px;
}
.views {
    display: flex;
    align-items: center;
    gap: 3px;
    padding-right: 15px;
}
.views button {
    min-width: 23px;
    height: 18px;
}
.views .active {
    background: #c2d5f2;
}
.views .percent {
    font-size: 13px;
    margin-left: 16px;
}
.percent::after {
    margin-left: 16px;
}
.slider {
    display: flex;
    align-items: center;
    gap: 3px;
}
.slider input {
    appearance: none;
    width: 91px;
    height: 2px;
    background: #444;
}
.slider input::-webkit-slider-thumb {
    appearance: none;
    width: 4px;
    height: 8px;
    background: #333;
}

/* taskbar */
.taskbar {
    display: flex;
    align-items: center;
    gap: 4px;
    height: 40px;
    flex: none;
    padding-left: 8px;
    border-top: 1px solid #1c2731;
    background: linear-gradient(rgba(255,255,255,0.25), rgba(255,255,255,0) 3px, rgba(0,0,0,0.1)), linear-gradient(90deg, #1d2a38, #33485c 8%, #2b4156 22%, #33485d 32%, #4a6180 42%, #536a86 58%, #4b6482 80%, #2a3b4d 88%, #1c2833);
}
.start {
    margin-right: 10px;
}
.task {
    width: 58px;
    height: 38px;
}
.task.open {
    border: 1px solid #a9b2bb;
    border-radius: 3px;
    background: linear-gradient(135deg, rgba(255,255,255,0.5), rgba(255,255,255,0.15) 60%);
}
.task.stacked {
    width: 53px;
    margin-right: 5px;
    box-shadow: 3px 0 0 #33424f, 4px 0 0 #a9b2bb;
}
.task.more {
    width: 50px;
    margin-right: 8px;
    box-shadow: 3px 0 0 #33424f, 4px 0 0 #a9b2bb, 6px 0 0 #33424f, 7px 0 0 #a9b2bb;
}
.task.front {
    background: linear-gradient(135deg, rgba(255,255,255,0.8), rgba(255,255,255,0.4));
}
.sage {
    width: 32px;
    height: 32px;
    border: 1px solid #fff;
    border-top: 5px solid #9a9a00;
    border-bottom: 6px solid #a000a0;
    background: #00594c;
    color: #fff;
    font: bold 13px/20px "Liberation Sans", sans-serif;
}
.tray {
    display: flex;
    align-items: center;
    gap: 8px;
    margin-left: auto;
    color: #fff;
}
.hidden-icons {
    margin-right: 6px;
}
time {
    width: 66px;
    margin-left: 6px;
    text-align: center;
    line-height: 17px;
}
.desktop {
    width: 14px;
    height: 38px;
    border: 1px solid #8a949d;
    background: rgba(255,255,255,0.15);
}
```
